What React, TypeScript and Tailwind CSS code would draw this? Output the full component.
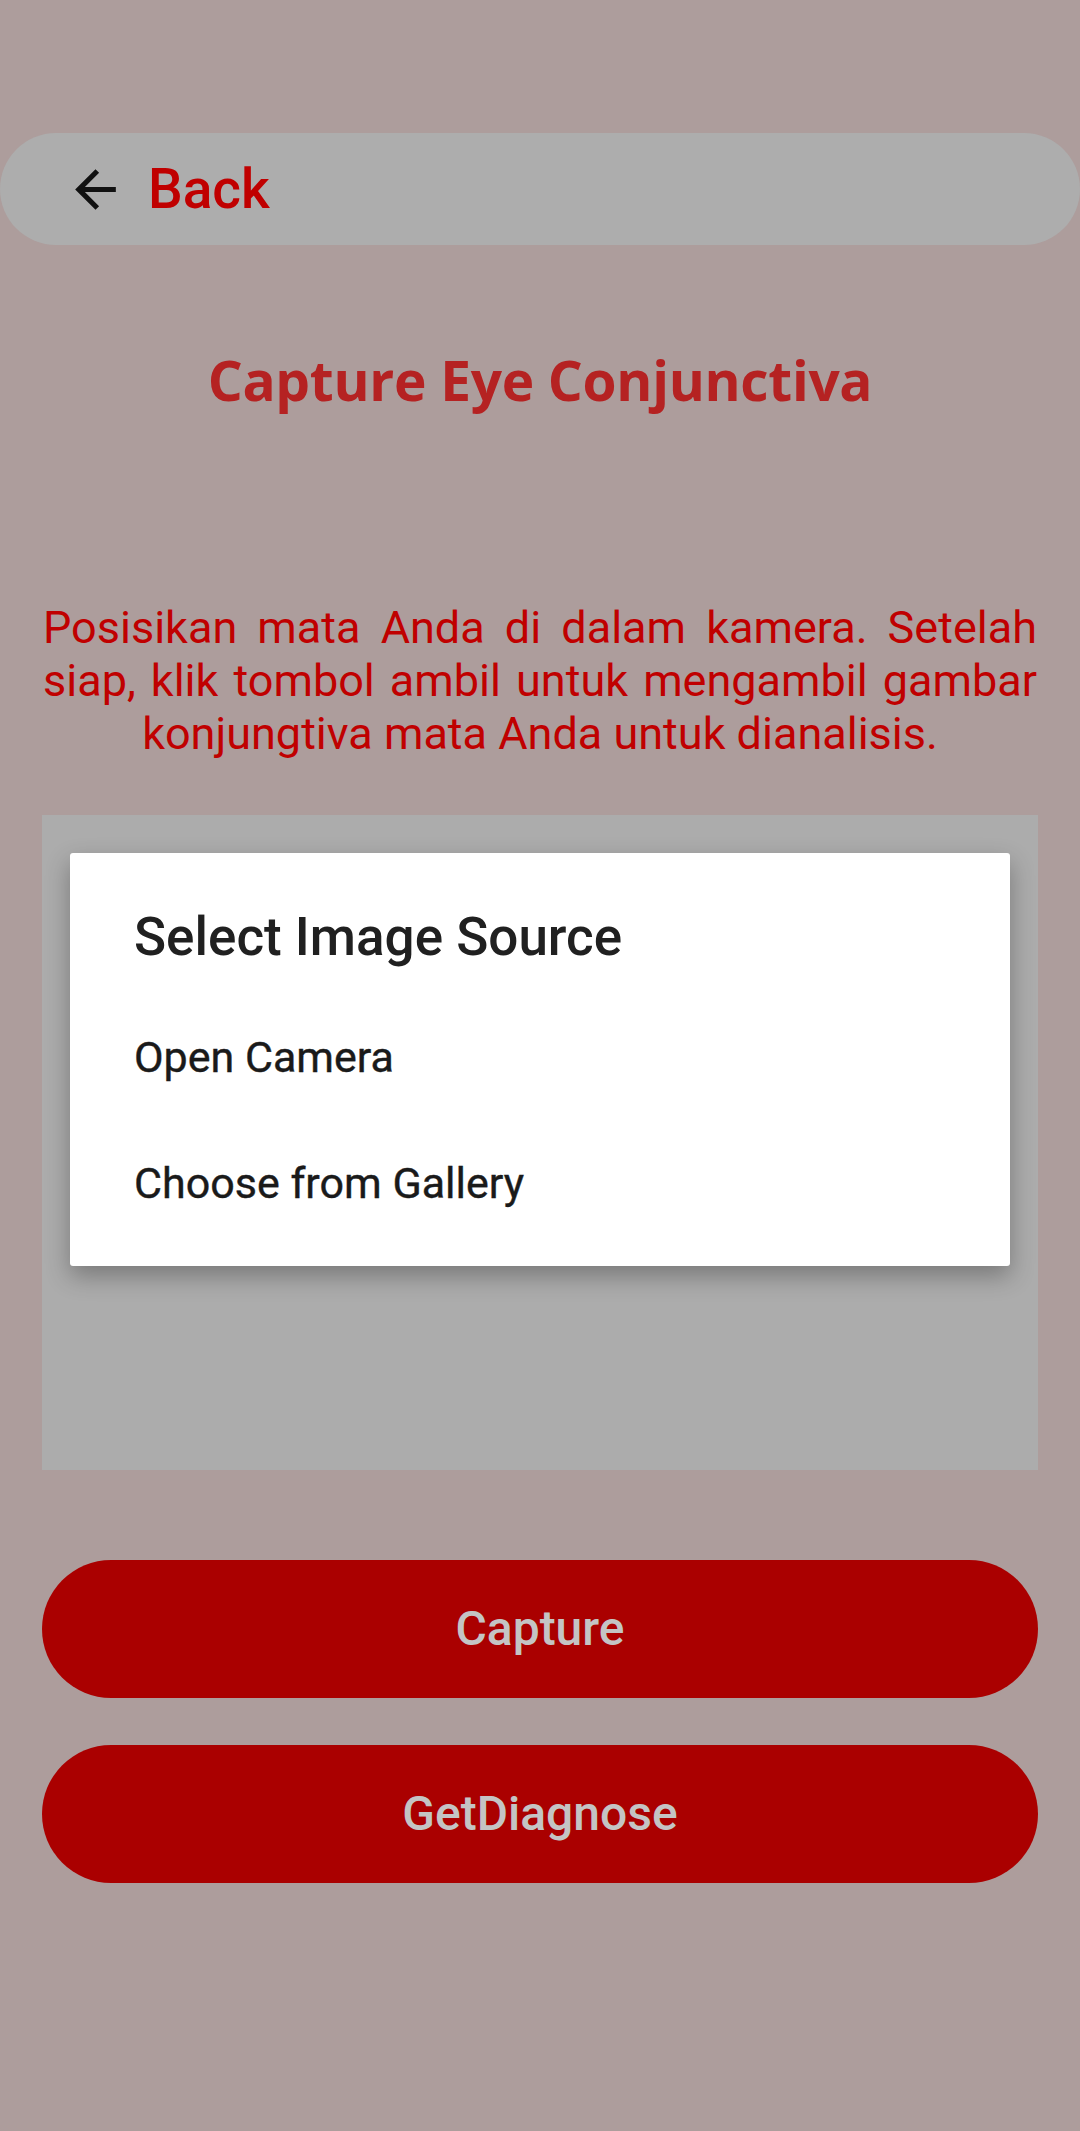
const roboto = { fontFamily: "Roboto, 'Liberation Sans', sans-serif" };

function BackArrow() {
  return (
    <svg viewBox="0 0 24 24" className="h-[61px] w-[61px] -ml-[10px]" fill="#111" aria-hidden="true">
      <path d="M20 11H7.83l5.59-5.59L12 4l-8 8 8 8 1.41-1.41L7.83 13H20v-2z" />
    </svg>
  );
}

const sources = ["Open Camera", "Choose from Gallery"];

export default function App() {
  return (
    <div className="min-h-[2131px] w-[1080px] bg-[#ad9d9c] pt-[133px]" style={roboto}>
      {/* top bar */}
      <div className="flex h-[112px] items-center gap-[22px] rounded-full bg-[#adadad] pl-[75px]">
        <BackArrow />
        <span className="text-[55px] leading-none font-medium text-[#c00000]">Back</span>
      </div>

      <h1 className="mt-[105px] text-center font-['Open_Sans',sans-serif] text-[55px] leading-[60px] font-bold tracking-[-0.3px] text-[#b52222]">
        Capture Eye Conjunctiva
      </h1>

      <p className="mx-[43px] mt-[191px] text-justify text-[45px] leading-[53px] text-[#c00000] [text-align-last:center]">
        Posisikan mata Anda di dalam kamera. Setelah siap, klik tombol ambil untuk mengambil gambar konjungtiva mata Anda untuk dianalisis.
      </p>

      {/* camera preview with the source picker over it */}
      <div className="mx-[42px] mt-[55px] h-[655px] bg-[#acacac] px-[28px] pt-[38px]">
        <div className="h-[413px] rounded-[3px] bg-white px-[64px] pt-[54px] shadow-[0_10px_24px_rgba(0,0,0,0.3)]">
          <h2 className="text-[53px] leading-[60px] font-medium text-[#202020]">Select Image Source</h2>
          <ul className="mt-[68px] flex flex-col gap-[82px]">
            {sources.map((s) => (
              <li key={s} className="text-[43px] leading-[44px] text-[#1a1a1a] [-webkit-text-stroke:0.4px_#1a1a1a]">
                {s}
              </li>
            ))}
          </ul>
        </div>
      </div>

      <div className="mx-[42px] mt-[90px] flex flex-col gap-[47px]">
        {["Capture", "GetDiagnose"].map((label) => (
          <button
            key={label}
            className="flex h-[138px] items-center justify-center rounded-full bg-[#aa0000] text-[48px] font-medium text-[#c4c4c4]"
          >
            {label}
          </button>
        ))}
      </div>
    </div>
  );
}
